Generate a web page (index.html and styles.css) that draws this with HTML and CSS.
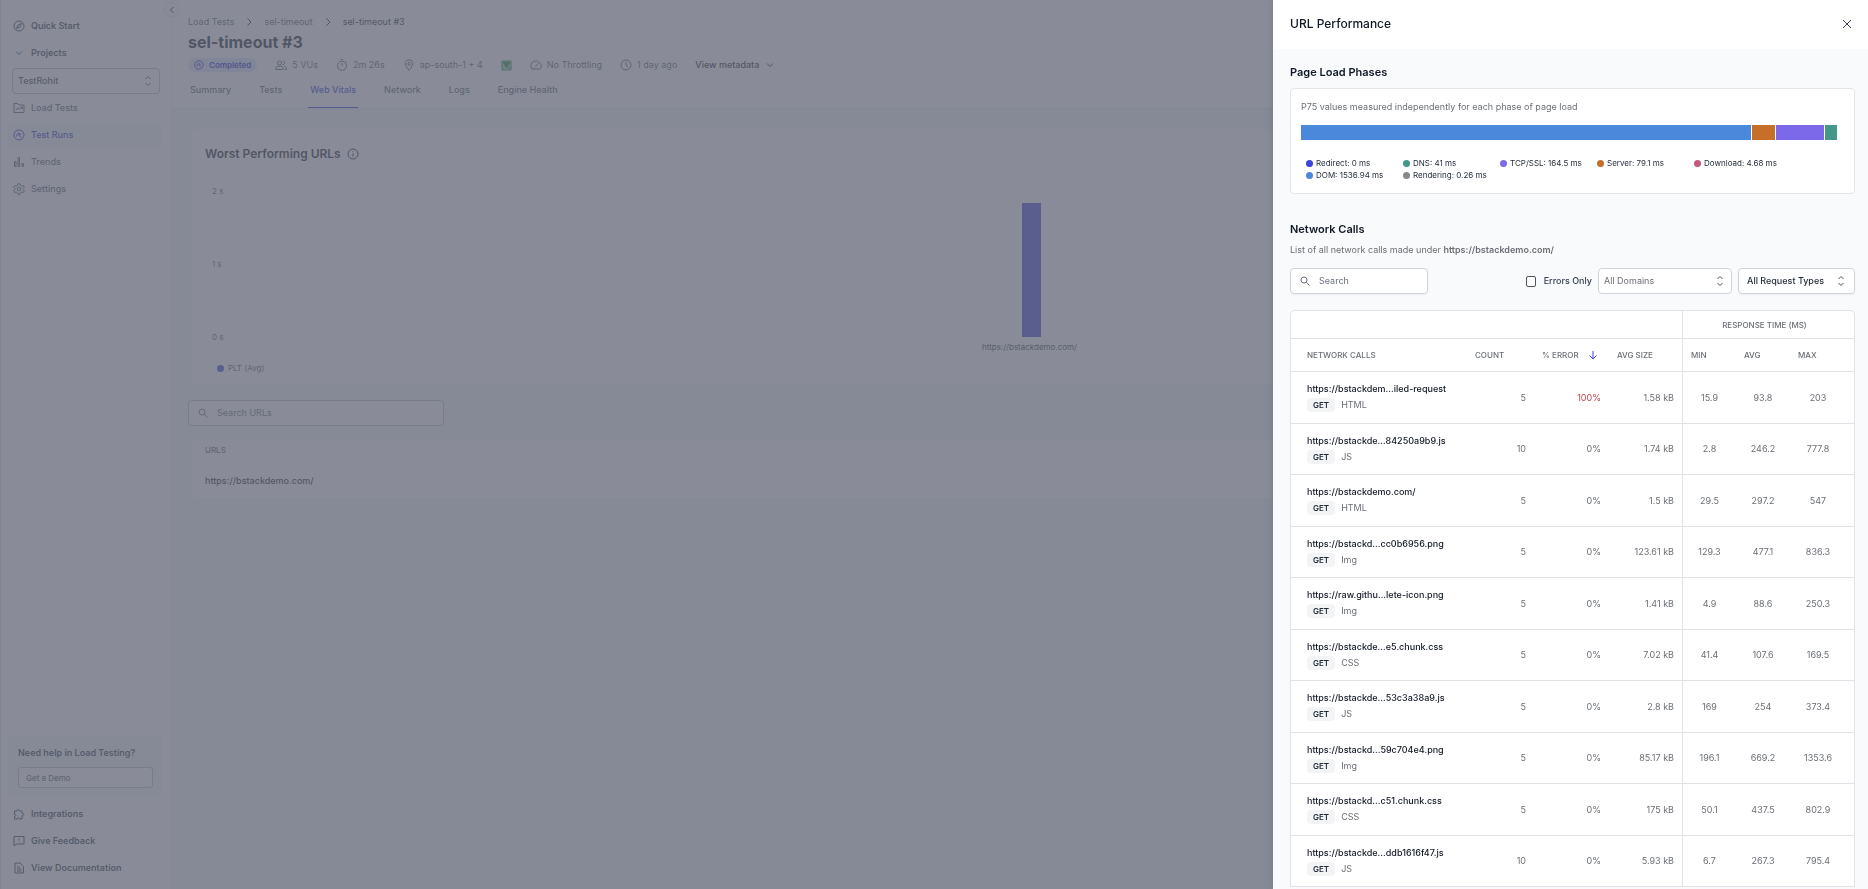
FILE: index.html
```html
<!DOCTYPE html>
<html lang="en">
<head>
    <meta charset="UTF-8">
    <meta name="viewport" content="width=device-width, initial-scale=1.0">
    <title>sel-timeout #3 - Load Testing</title>
    <link rel="stylesheet" href="styles.css">
</head>
<body>
    <!-- Shared icons -->
    <svg class="sprite" aria-hidden="true">
        <symbol id="i-updown" viewBox="0 0 12 12"><path d="M3.5 4 6 1.500 8.500 4M3.500 8 6 10.500 8.500 8"/></symbol>
        <symbol id="i-search" viewBox="0 0 12 12"><circle cx="5" cy="5" r="3"/><path d="m7.200 7.200 3.300 3.300"/></symbol>
        <symbol id="i-right" viewBox="0 0 12 12"><path d="m4.500 2.500 3.500 3.500-3.500 3.500"/></symbol>
        <symbol id="i-down" viewBox="0 0 12 12"><path d="m3 4.500 3 3 3-3"/></symbol>
        <symbol id="i-run" viewBox="0 0 12 12"><circle cx="6" cy="6" r="5"/><path d="M3.800 7.500V5.800L6 3.800l.3 2.700 2.200 2M6.300 6.300l1.900-1.500"/></symbol>
    </svg>

    <div class="app">
        <aside class="sidebar">
            <nav class="side-nav">
                <a href="#" class="nav-item strong">
                    <svg class="icon" viewBox="0 0 12 12"><circle cx="6" cy="6" r="5"/><path d="M8.500 3.500 7 7 3.500 8.500 5 5z"/></svg>
                    Quick Start
                </a>
                <a href="#" class="nav-item strong">
                    <svg class="icon"><use href="#i-down"/></svg>
                    Projects
                </a>
                <div class="select project-select">
                    <select aria-label="Project"><option>TestRohit</option></select>
                    <svg class="icon"><use href="#i-updown"/></svg>
                </div>
                <a href="#" class="nav-item">
                    <svg class="icon" viewBox="0 0 12 12"><path d="M1 10.500V1.500h3.500L6 3h5v7.500zM3 8l2-2 1.500 1L9 5.500M7.500 5H9.500v2"/></svg>
                    Load Tests
                </a>
                <a href="#" class="nav-item active">
                    <svg class="icon"><use href="#i-run"/></svg>
                    Test Runs
                </a>
                <a href="#" class="nav-item">
                    <svg class="icon" viewBox="0 0 12 12"><path d="M1.500 5.500h1.500v5H1.500zM5 1.500h1.500v9H5zM9 7.500h1.500v3H9z"/></svg>
                    Trends
                </a>
                <a href="#" class="nav-item">
                    <svg class="icon" viewBox="0 0 12 12"><path d="M5 .8h2l.4 1.600 1.300.7 1.600-.5 1 1.700-1.200 1.200v1.100l1.200 1.200-1 1.700-1.600-.5-1.300.7-.4 1.600H5l-.4-1.600-1.300-.7-1.600.5-1-1.700 1.200-1.200V5.500L.7 4.300l1-1.700 1.600.5 1.300-.7z"/><circle cx="6" cy="6" r="1.700"/></svg>
                    Settings
                </a>
            </nav>
            <div class="side-bottom">
                <div class="help">
                    <div class="help-title">Need help in Load Testing?</div>
                    <button class="demo-btn">Get a Demo</button>
                </div>
                <a href="#" class="nav-item strong">
                    <svg class="icon" viewBox="0 0 12 12"><path d="M1.500 3h2.700c-.6-2.200 2.600-2.200 2 0H9v2.500c2.300-.7 2.300 2.700 0 2V11H6.500c.5-2-2.300-2-1.800 0H1.500V8.300c1.900.5 1.900-2.200 0-1.700z"/></svg>
                    Integrations
                </a>
                <a href="#" class="nav-item strong">
                    <svg class="icon" viewBox="0 0 12 12"><path d="M1 11V1.500h10V9H3zM6 3.500v2.200M6 7v.5"/></svg>
                    Give Feedback
                </a>
                <a href="#" class="nav-item strong">
                    <svg class="icon" viewBox="0 0 12 12"><path d="M2 1h5l3.500 3.500V11H2zM4 5h3M4 7h4.500M4 9h4.500"/></svg>
                    View Documentation
                </a>
            </div>
        </aside>
        <button class="collapse-btn" aria-label="Collapse sidebar">
            <svg class="icon" viewBox="0 0 12 12"><path d="M7.500 3 4.500 6l3 3"/></svg>
        </button>

        <main class="main">
            <header class="page-header">
                <nav class="crumbs">
                    <a href="#">Load Tests</a>
                    <svg class="icon"><use href="#i-right"/></svg>
                    <a href="#">sel-timeout</a>
                    <svg class="icon"><use href="#i-right"/></svg>
                    <span class="current">sel-timeout #3</span>
                </nav>
                <h1>sel-timeout #3</h1>
                <div class="meta">
                    <span class="badge"><svg class="icon"><use href="#i-run"/></svg>Completed</span>
                    <span><svg class="icon" viewBox="0 0 12 12"><circle cx="4.500" cy="4" r="2"/><path d="M.8 10.500V9c0-2.500 7.400-2.500 7.400 0v1.500zM7.500 2.200c2.800-.4 2.800 3.800 0 3.500M9.500 7c1.500.5 2 1.200 2 3.500H9.800"/></svg>5 VUs</span>
                    <span><svg class="icon" viewBox="0 0 12 12"><circle cx="6" cy="6.800" r="4.500"/><path d="M4.500.7h3M6 4v3M9.500 2.500l1 1"/></svg>2m 26s</span>
                    <span><svg class="icon" viewBox="0 0 12 12"><path d="M6 11.300C-.5 4 3 1 6 1s6.500 3 0 10.300z"/><circle cx="6" cy="4.800" r="1.300"/></svg>ap-south-1 + 4</span>
                    <svg class="icon runner" viewBox="0 0 12 12"><path class="tile" d="M1 1h10v10H1z"/><path class="mark" d="M2 2.500h8L6 8zM8 8.500h2"/></svg>
                    <span><svg class="icon" viewBox="0 0 12 12"><path d="M10 3.500C12 6 11.500 9 10 10H2C0 8 .5 2 5.500 2 7 2 8 2.300 8.500 2.600M5.500 7.500 9.500 3"/></svg>No Throttling</span>
                    <span><svg class="icon" viewBox="0 0 12 12"><circle cx="6" cy="6" r="5"/><path d="M6 3v3l2 2"/></svg>1 day ago</span>
                    <button class="metadata-btn">View metadata<svg class="icon"><use href="#i-down"/></svg></button>
                </div>
                <nav class="tabs">
                    <a href="#">Summary</a>
                    <a href="#">Tests</a>
                    <a href="#" class="active">Web Vitals</a>
                    <a href="#">Network</a>
                    <a href="#">Logs</a>
                    <a href="#">Engine Health</a>
                </nav>
            </header>

            <section class="content">
                <div class="card chart-card">
                    <h2>Worst Performing URLs
                        <svg class="icon" viewBox="0 0 12 12"><circle cx="6" cy="6" r="5"/><path d="M6 5.500v3M6 3.300v.9"/></svg>
                    </h2>
                    <div class="chart">
                        <div class="y-axis"><span>2 s</span><span>1 s</span><span>0 s</span></div>
                        <div class="plot"><div class="bar" style="height: 92%"></div></div>
                    </div>
                    <div class="x-label">https://bstackdemo.com/</div>
                    <div class="chart-legend"><i class="dot"></i>PLT (Avg)</div>
                </div>
                <div class="search url-search">
                    <svg class="icon"><use href="#i-search"/></svg>
                    <input type="text" placeholder="Search URLs" aria-label="Search URLs">
                </div>
                <table class="card url-table">
                    <thead><tr><th>URLS</th></tr></thead>
                    <tbody><tr><td>https://bstackdemo.com/</td></tr></tbody>
                </table>
            </section>
        </main>
    </div>

    <div class="backdrop"></div>

    <div class="drawer" role="dialog" aria-labelledby="drawer-title">
        <div class="drawer-header">
            <h2 id="drawer-title">URL Performance</h2>
            <button class="close-btn" aria-label="Close">
                <svg class="icon" viewBox="0 0 12 12"><path d="m2 2 8 8M10 2l-8 8"/></svg>
            </button>
        </div>
        <div class="drawer-body">
            <h3>Page Load Phases</h3>
            <div class="phases">
                <p>P75 values measured independently for each phase of page load</p>
                <div class="phase-bar">
                    <div class="dom" style="flex-grow: 1536.94"></div>
                    <div class="server" style="flex-grow: 79.1"></div>
                    <div class="tcp" style="flex-grow: 164.5"></div>
                    <div class="dns" style="flex-grow: 41"></div>
                </div>
                <ul class="phase-legend">
                    <li><i class="dot redirect"></i>Redirect: 0 ms</li>
                    <li><i class="dot dns"></i>DNS: 41 ms</li>
                    <li><i class="dot tcp"></i>TCP/SSL: 164.5 ms</li>
                    <li><i class="dot server"></i>Server: 79.1 ms</li>
                    <li><i class="dot download"></i>Download: 4.68 ms</li>
                    <li><i class="dot dom"></i>DOM: 1536.94 ms</li>
                    <li><i class="dot rendering"></i>Rendering: 0.26 ms</li>
                </ul>
            </div>

            <h3>Network Calls</h3>
            <p class="sub">List of all network calls made under <b>https://bstackdemo.com/</b></p>
            <div class="filters">
                <div class="search">
                    <svg class="icon"><use href="#i-search"/></svg>
                    <input type="text" placeholder="Search" aria-label="Search">
                </div>
                <label class="errors-only"><input type="checkbox">Errors Only</label>
                <div class="select domains">
                    <select aria-label="Domains"><option>All Domains</option></select>
                    <svg class="icon"><use href="#i-updown"/></svg>
                </div>
                <div class="select types">
                    <select aria-label="Request types"><option>All Request Types</option></select>
                    <svg class="icon"><use href="#i-updown"/></svg>
                </div>
            </div>

            <div class="table-wrap">
                <table class="calls">
                    <colgroup>
                        <col><col class="c-count"><col class="c-error"><col class="c-size">
                        <col class="c-time"><col class="c-time"><col class="c-max">
                    </colgroup>
                    <thead>
                        <tr><th colspan="4"></th><th colspan="3" class="group">RESPONSE TIME (MS)</th></tr>
                        <tr>
                            <th>NETWORK CALLS</th>
                            <th>COUNT</th>
                            <th><span class="sort">% ERROR<svg class="icon" viewBox="0 0 12 12"><path d="M6 2v8M2.500 6.500 6 10l3.500-3.500"/></svg></span></th>
                            <th>AVG SIZE</th>
                            <th>MIN</th>
                            <th>AVG</th>
                            <th>MAX</th>
                        </tr>
                    </thead>
                    <tbody>
                        <tr><td><a href="#">https://bstackdem...iled-request</a><span class="method">GET</span>HTML</td><td>5</td><td class="bad">100%</td><td>1.58 kB</td><td>15.9</td><td>93.8</td><td>203</td></tr>
                        <tr><td><a href="#">https://bstackde...84250a9b9.js</a><span class="method">GET</span>JS</td><td>10</td><td>0%</td><td>1.74 kB</td><td>2.8</td><td>246.2</td><td>777.8</td></tr>
                        <tr><td><a href="#">https://bstackdemo.com/</a><span class="method">GET</span>HTML</td><td>5</td><td>0%</td><td>1.5 kB</td><td>29.5</td><td>297.2</td><td>547</td></tr>
                        <tr><td><a href="#">https://bstackd...cc0b6956.png</a><span class="method">GET</span>Img</td><td>5</td><td>0%</td><td>123.61 kB</td><td>129.3</td><td>477.1</td><td>836.3</td></tr>
                        <tr><td><a href="#">https://raw.githu...lete-icon.png</a><span class="method">GET</span>Img</td><td>5</td><td>0%</td><td>1.41 kB</td><td>4.9</td><td>88.6</td><td>250.3</td></tr>
                        <tr><td><a href="#">https://bstackde...e5.chunk.css</a><span class="method">GET</span>CSS</td><td>5</td><td>0%</td><td>7.02 kB</td><td>41.4</td><td>107.6</td><td>169.5</td></tr>
                        <tr><td><a href="#">https://bstackde...53c3a38a9.js</a><span class="method">GET</span>JS</td><td>5</td><td>0%</td><td>2.8 kB</td><td>169</td><td>254</td><td>373.4</td></tr>
                        <tr><td><a href="#">https://bstackd...59c704e4.png</a><span class="method">GET</span>Img</td><td>5</td><td>0%</td><td>85.17 kB</td><td>196.1</td><td>669.2</td><td>1353.6</td></tr>
                        <tr><td><a href="#">https://bstackd...c51.chunk.css</a><span class="method">GET</span>CSS</td><td>5</td><td>0%</td><td>175 kB</td><td>50.1</td><td>437.5</td><td>802.9</td></tr>
                        <tr><td><a href="#">https://bstackde...ddb1616f47.js</a><span class="method">GET</span>JS</td><td>10</td><td>0%</td><td>5.93 kB</td><td>6.7</td><td>267.3</td><td>795.4</td></tr>
                    </tbody>
                </table>
            </div>
        </div>
    </div>
</body>
</html>
```
FILE: styles.css
```css
* {
    box-sizing: border-box;
}

body {
    margin: 0;
    height: 100vh;
    overflow: hidden;
    font-family: Inter, "Liberation Sans", sans-serif;
    font-size: 9px;
    line-height: 12px;
    color: #5b6472;
    background: #f2f7f8;
}

h1, h2, h3, p, ul {
    margin: 0;
    padding: 0;
}

a {
    color: inherit;
    text-decoration: none;
}

button, input, select {
    font: inherit;
    color: inherit;
    margin: 0;
}

button {
    cursor: pointer;
}

.sprite {
    display: none;
}

.icon {
    width: 12px;
    height: 12px;
    flex: none;
    fill: none;
    stroke: currentColor;
    stroke-width: 1;
}

/* Sidebar */
.app {
    display: flex;
    height: 100vh;
}

.sidebar {
    width: 172px;
    flex: none;
    display: flex;
    flex-direction: column;
    justify-content: space-between;
    padding: 14px 10px 9px 7px;
    background: #fff;
    border-left: 1px solid #d5daf0;
    border-right: 1px solid #f0f1f4;
}

.nav-item {
    display: flex;
    align-items: center;
    gap: 6px;
    height: 24px;
    margin-bottom: 3px;
    padding: 0 5px;
    border-radius: 4px;
    font-weight: 500;
}

.nav-item.strong {
    font-weight: 600;
    color: #374151;
}

.nav-item.active {
    background: #f2f7f8;
    color: #3338d6;
}

.side-bottom .nav-item:last-child {
    margin-bottom: 0;
}

.help {
    padding: 12px 8px 9px 10px;
    margin-bottom: 5px;
    background: #f2f7f8;
}

.help-title {
    font-weight: 600;
    color: #374151;
    margin-bottom: 8px;
}

.demo-btn {
    width: 100%;
    height: 21px;
    padding: 0 7px;
    text-align: left;
    font-size: 8px;
    font-weight: 500;
    background: #fff;
    border: 1px solid #b8bec8;
    border-radius: 3px;
}

.collapse-btn {
    position: absolute;
    top: 2px;
    left: 164px;
    width: 15px;
    height: 15px;
    padding: 0;
    display: flex;
    align-items: center;
    justify-content: center;
    background: #fff;
    border: 1px solid #dfe2e7;
    border-radius: 50%;
    color: #111827;
}

/* Form controls */
.select {
    position: relative;
    height: 26px;
}

.select select {
    appearance: none;
    width: 100%;
    height: 100%;
    padding: 0 24px 0 5px;
    background: #fff;
    border: 1px solid #d1d5db;
    border-radius: 4px;
    outline: none;
}

.select .icon {
    position: absolute;
    top: 7px;
    right: 6px;
    color: #4b5563;
    pointer-events: none;
}

.project-select {
    margin: 0 0 2px 4px;
    width: 148px;
    font-weight: 500;
    color: #374151;
}

.project-select select {
    border-color: #b8bec8;
}

.search {
    display: flex;
    align-items: center;
    gap: 8px;
    height: 26px;
    padding: 0 8px;
    background: #fff;
    border: 1px solid #d1d5db;
    border-radius: 4px;
    color: #6b7280;
}

.search input {
    min-width: 0;
    flex: 1;
    padding: 0;
    border: 0;
    outline: none;
    background: none;
}

.search input::placeholder {
    color: #6b7280;
    opacity: 1;
}

/* Main page */
.main {
    flex: 1;
    min-width: 0;
}

.page-header {
    padding: 15px 16px 0;
    background: #fff;
    border-bottom: 1px solid #e5e7eb;
}

.crumbs {
    display: flex;
    align-items: center;
    gap: 9px;
    height: 14px;
}

.crumbs .icon,
.crumbs .current {
    color: #1f2937;
}

h1 {
    margin-top: 2px;
    font-size: 16px;
    line-height: 23px;
    font-weight: 700;
    color: #1f2937;
}

.meta {
    display: flex;
    align-items: center;
    gap: 18px;
    height: 22px;
}

.meta span {
    display: flex;
    align-items: center;
    gap: 5px;
}

.meta .badge {
    height: 14px;
    padding: 0 6px;
    border-radius: 7px;
    background: #dbe3ff;
    color: #2328c8;
    font-size: 8px;
    font-weight: 600;
}

.badge .icon {
    width: 10px;
    height: 10px;
}

.runner {
    width: 11px;
    height: 11px;
}

.runner .tile {
    fill: #8fcf9f;
    stroke: #3f9a58;
}

.runner .mark {
    fill: #1e8a3e;
    stroke: #1e8a3e;
}

.metadata-btn {
    display: flex;
    align-items: center;
    gap: 5px;
    padding: 0;
    border: 0;
    background: none;
    font-weight: 500;
    color: #1f2937;
}

.tabs {
    display: flex;
    gap: 24px;
    font-weight: 500;
}

.tabs a {
    height: 32px;
    padding: 8px 2px 0;
}

.tabs .active {
    color: #3338d6;
    border-bottom: 1px solid #3338d6;
}

.content {
    padding: 20px 16px;
}

.card {
    margin: 0 0 0 4px;
    background: #fff;
    border-radius: 4px;
}

.chart-card {
    padding: 17px 17px 10px 13px;
}

.chart-card h2 {
    display: flex;
    align-items: center;
    gap: 6px;
    font-size: 12px;
    line-height: 16px;
    font-weight: 600;
    color: #1f2937;
}

.chart {
    display: flex;
    gap: 4px;
    height: 158px;
    margin-top: 23px;
    padding-left: 7px;
    font-size: 8px;
}

.y-axis {
    display: flex;
    flex-direction: column;
    justify-content: space-between;
}

.plot {
    flex: 1;
    display: flex;
    align-items: flex-end;
    justify-content: center;
    padding: 6px 0;
}

.bar {
    width: 19px;
    background: #4548d8;
}

.x-label {
    padding-left: 19px;
    font-size: 8px;
    line-height: 8px;
    text-align: center;
    color: #374151;
}

.chart-legend {
    display: flex;
    align-items: center;
    gap: 4px;
    margin: 11px 0 0 12px;
    font-size: 8px;
}

.dot {
    width: 7px;
    height: 7px;
    flex: none;
    border-radius: 50%;
    background: #4548d8;
}

.url-search {
    width: 256px;
    margin: 16px 0 14px;
    border-color: #b8bec8;
}

.url-table {
    width: calc(100% - 4px);
    border-spacing: 0;
    text-align: left;
}

.url-table th {
    padding: 4px 13px 8px;
    font-size: 8px;
    font-weight: 500;
}

.url-table td {
    padding: 11px 13px;
    font-weight: 500;
    color: #1f2937;
}

/* Drawer */
.backdrop {
    position: fixed;
    inset: 0;
    background: rgba(98, 102, 117, 0.75);
}

.drawer {
    position: fixed;
    top: 0;
    right: 0;
    bottom: 0;
    width: 595px;
    overflow: hidden;
    background: #f9fafb;
    box-shadow: 0 0 8px rgba(75, 85, 99, 0.3);
    color: #6b6f76;
}

.drawer-header {
    display: flex;
    align-items: center;
    justify-content: space-between;
    height: 49px;
    padding: 0 15px 2px 17px;
    background: #fff;
}

.drawer-header h2 {
    font-size: 12px;
    font-weight: 500;
    color: #111827;
}

.close-btn {
    display: flex;
    padding: 0;
    border: 0;
    background: none;
    color: #374151;
}

.drawer-body {
    padding: 16px 13px 0 17px;
}

h3 {
    font-size: 11px;
    line-height: 14px;
    font-weight: 600;
    color: #111827;
}

.phases {
    margin: 9px 0 28px;
    padding: 12px 17px 12px 10px;
    background: #fff;
    border: 1px solid #e2e5ea;
    border-radius: 4px;
}

.phase-bar {
    display: flex;
    gap: 1px;
    height: 15px;
    margin: 12px 0 17px;
}

.phase-bar div {
    flex: 1 1 0;
}

.phase-legend {
    display: grid;
    grid-template-columns: repeat(5, 97px);
    padding-left: 5px;
    list-style: none;
    font-size: 8px;
    color: #1f2937;
}

.phase-legend li {
    display: flex;
    align-items: center;
    gap: 3px;
    white-space: nowrap;
}

.redirect { background: #3d45d9; }
.dom { background: #4b87db; }
.server { background: #c66f28; }
.tcp { background: #7c69ea; }
.dns { background: #43988a; }
.download { background: #c6577d; }
.rendering { background: #888; }

.sub {
    margin: 8px 0 12px;
}

.sub b {
    font-weight: 600;
}

.filters {
    display: flex;
    align-items: center;
    gap: 6px;
    margin-bottom: 16px;
}

.filters .search {
    width: 138px;
    margin-right: auto;
}

.filters .search,
.types select {
    box-shadow: 0 1px 2px rgba(0, 0, 0, 0.06);
}

.errors-only {
    display: flex;
    align-items: center;
    gap: 8px;
    font-weight: 500;
    color: #374151;
}

.errors-only input {
    appearance: none;
    width: 10px;
    height: 11px;
    background: #fff;
    border: 1px solid #4b5563;
    border-radius: 2px;
}

.domains {
    width: 134px;
}

.types {
    width: 117px;
    font-weight: 500;
    color: #1f2937;
}

.types select {
    padding-left: 8px;
}

.types .icon {
    right: 8px;
}

.table-wrap {
    background: #fff;
    border: 1px solid #dfe2e6;
    border-bottom: 0;
    border-radius: 5px 5px 0 0;
}

.calls {
    width: 100%;
    table-layout: fixed;
    border-spacing: 0;
}

.c-count { width: 67px; }
.c-error { width: 75px; }
.c-size { width: 73px; }
.c-time { width: 54px; }
.c-max { width: 64px; }

.calls th {
    height: 33px;
    padding: 0 8px;
    font-size: 8px;
    font-weight: 500;
    text-align: left;
    white-space: nowrap;
    border-bottom: 1px solid #dfe2e6;
}

.calls tr:first-child th {
    height: 28px;
}

.calls th.group {
    text-align: center;
    padding-right: 16px;
}

.calls td {
    height: 52px;
    padding: 0 8px;
    text-align: right;
    border-bottom: 1px solid #dfe2e6;
}

.calls tr:nth-child(even) td {
    height: 51px;
}

.calls th:first-child,
.calls td:first-child {
    padding-left: 16px;
    text-align: left;
}

.calls td:nth-child(n + 5) {
    text-align: center;
}

.calls td:last-child {
    padding-right: 16px;
}

.calls .group,
.calls th:nth-child(5),
.calls td:nth-child(5) {
    border-left: 1px solid #dfe2e6;
}

.calls td a {
    display: block;
    margin-bottom: 3px;
    font-weight: 500;
    color: #111827;
}

.method {
    display: inline-block;
    height: 14px;
    margin-right: 6px;
    padding: 0 6px;
    border-radius: 4px;
    background: #f3f4f6;
    font-size: 8px;
    line-height: 14px;
    font-weight: 600;
    color: #1f2937;
}

.calls td.bad {
    color: #c2454b;
}

.sort {
    display: flex;
    align-items: center;
    gap: 8px;
}

.sort .icon {
    color: #3d45d9;
}
```
